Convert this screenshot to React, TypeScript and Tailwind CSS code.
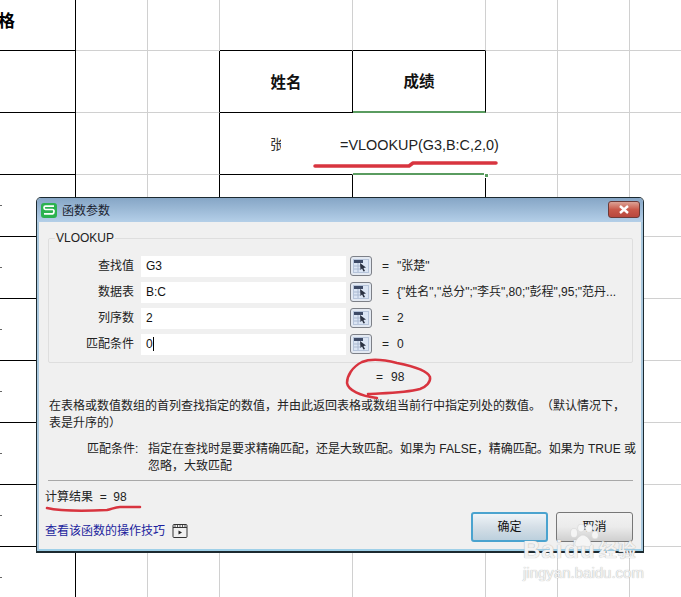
import React from "react";

const font = { fontFamily: '"Liberation Sans", "Noto Sans CJK SC", sans-serif' };

const colWidths = ["w-[76px]", "w-[72px]", "w-[72px]", "w-[133px]", "w-[133px]", "w-[72px]", "w-[72px]", "w-[52px]"];
const rowHeights = ["h-[51px]", "h-[62px]", "h-[62px]", "h-[62px]", "h-[62px]", "h-[62px]", "h-[62px]", "h-[62px]", "h-[62px]", "h-[62px]"];

function cellBorders(row: number, col: number) {
  let right = "border-r-[#d0d0d0]";
  let bottom = "border-b border-b-[#d0d0d0]";
  if (col === 0) {
    right = "border-r-black";
    bottom = "border-b border-b-black";
  }
  if (col === 2 && (row === 1 || row === 2 || row === 3)) right = "border-r-black";
  if ((col === 3 || col === 4) && (row === 1 || row === 3)) right = "border-r-black";
  if ((col === 3 || col === 4) && row === 2) right = "border-r-transparent";
  if ((col === 3 || col === 4) && row === 0) bottom = "border-b border-b-black";
  if (col === 3 && (row === 1 || row === 2)) bottom = "border-b border-b-black";
  if (col === 4 && (row === 1 || row === 2)) bottom = "border-b-2 border-b-[#5a9c60]";
  return `${right} ${bottom}`;
}

function RefButton() {
  return (
    <button className="w-[22px] h-[20px] rounded-[3px] border border-[#7d8087] bg-[#e3e9f2] flex items-center justify-center shrink-0">
      <svg width="16" height="14" viewBox="0 0 16 14">
        <rect x="0.5" y="0.5" width="15" height="13" fill="#dbe5f4" stroke="#b6c4da" />
        <rect x="1" y="1" width="9" height="3" fill="#3d4a66" />
        <path d="M1 7h7M1 10h7M5 4v9" stroke="#a9b8d0" strokeWidth="1" />
        <path d="M7 4l6 4.5-2.5.5 1.5 3-1.5.5-1.5-3L7.500 11z" fill="#2b3242" />
      </svg>
    </button>
  );
}

function ParamRow({ label, value, result, caret }: { label: string; value: string; result: string; caret?: boolean }) {
  return (
    <div className="flex items-center h-[26px]">
      <div className="w-[85px] text-right text-[12px] text-[#222] shrink-0">{label}</div>
      <div className="ml-[7px] w-[205px] h-[21px] bg-white flex items-center pl-[5px] text-[12px] text-[#111] shrink-0">
        {value}
        {caret && <span className="w-px h-[14px] bg-black" />}
      </div>
      <div className="ml-[4px]">
        <RefButton />
      </div>
      <div className="ml-[10px] text-[12px] text-[#222] whitespace-nowrap">
        <span className="mr-[8px]">=</span>
        {result}
      </div>
    </div>
  );
}

function Dialog() {
  return (
    <div
      style={font}
      className="absolute left-[36px] top-[197px] w-[608px] h-[356px] rounded-t-[5px] border border-[#1c2a30] border-b-2 bg-[#f0f0f0] overflow-hidden flex flex-col [text-spacing-trim:space-all]"
    >
      <div className="h-[24px] bg-gradient-to-b from-[#86a6c6] to-[#b4cfe8] flex items-center pl-[4px] pr-[4px] shrink-0">
        <div className="w-[16px] h-[15px] rounded-[3px] bg-[#2cb24f] flex items-center justify-center">
          <svg width="12" height="10" viewBox="0 0 12 10">
            <path d="M11 1.200H2.500Q1 1.200 1 2.700T2.500 4.500h7Q11 4.500 11 6.500T9.500 8.800H1" fill="none" stroke="#fff" strokeWidth="1.700" />
          </svg>
        </div>
        <span className="ml-[5px] pt-[2px] text-[12px] text-[#1a2230]">函数参数</span>
        <div className="ml-auto mr-[-1px] mt-[-2px] w-[32px] h-[17px] rounded-[3px] border border-[#6d3a38] bg-gradient-to-b from-[#dba296] via-[#c9594a] to-[#b8473d] flex items-center justify-center">
          <svg width="12" height="9" viewBox="0 0 12 9">
            <path d="M2 1l8 7M10 1L2 8" stroke="#fff" strokeWidth="2.400" />
          </svg>
        </div>
      </div>

      <div className="flex-1 flex flex-col px-[9px] border-x-2 border-b-2 border-x-[#a9c8de] border-b-[#9fd0e8]">
        <div className="relative mt-[16px] h-[125px] border border-[#dedede] rounded-[2px] pt-[14px] mr-[-1px]">
          <span className="absolute left-[6px] top-[-8px] bg-[#f0f0f0] px-[1px] text-[12px] leading-[14px] text-[#222]">VLOOKUP</span>
          <ParamRow label="查找值" value="G3" result={'"张楚"'} />
          <ParamRow label="数据表" value="B:C" result={'{"姓名","总分";"李兵",80;"彭程",95;"范丹...'} />
          <ParamRow label="列序数" value="2" result="2" />
          <ParamRow label="匹配条件" value="0" result="0" caret />
        </div>

        <div className="h-[30px] pl-[328px] pt-[6px] text-[12px] leading-[16px] text-[#222]">
          <span className="mr-[8px]">=</span>98
        </div>

        <p className="pl-[1px] mt-[5px] text-[12px] leading-[17px] text-[#222] whitespace-nowrap">
          在表格或数值数组的首列查找指定的数值，并由此返回表格或数组当前行中指定列处的数值。（默认情况下，
          <br />
          表是升序的）
        </p>

        <div className="flex mt-[9px] text-[12px] leading-[17px] text-[#222]">
          <div className="w-[100px] pl-[39px] shrink-0">匹配条件:</div>
          <div className="whitespace-nowrap">
            指定在查找时是要求精确匹配，还是大致匹配。如果为 FALSE，精确匹配。如果为 TRUE 或
            <br />
            忽略，大致匹配
          </div>
        </div>

        <div className="mt-[5px] h-px bg-[#a8a8a8] mr-[-1px]" />

        <div className="flex flex-1 justify-between">
          <div className="flex flex-col pt-[8px] ml-[-3px]">
            <div className="text-[12px] leading-[16px] text-[#222] whitespace-pre">计算结果  =  98</div>
            <div className="mt-[18px] flex items-center">
              <span className="text-[12px] leading-[16px] text-[#1c1f9e]">查看该函数的操作技巧</span>
              <svg className="ml-[7px]" width="16" height="16" viewBox="0 0 16 16">
                <rect x="1" y="1.500" width="14" height="13" rx="1" fill="none" stroke="#333" />
                <path d="M1 4.500h14" stroke="#333" />
                <path d="M3 1.500v3M5.500 1.500v3M8 1.500v3M10.500 1.500v3M13 1.500v3" stroke="#333" strokeWidth="0.800" />
                <path d="M6.500 7.500l3.500 2-3.500 2z" fill="#222" />
              </svg>
            </div>
          </div>
          <div className="flex gap-[8px] pt-[31px] mr-[-1px]">
            <button className="w-[77px] h-[30px] rounded-[3px] border-2 border-[#4aa3cf] bg-gradient-to-b from-[#eff4f8] via-[#d5dfe7] to-[#bcd0dd] text-[12px] text-[#111]">确定</button>
            <button className="w-[77px] h-[30px] rounded-[3px] border border-[#777] bg-gradient-to-b from-[#f2f2f2] via-[#ebebeb] to-[#cfcfcf] text-[12px] text-[#111]">取消</button>
          </div>
        </div>
      </div>
    </div>
  );
}

function Watermark() {
  return (
    <div style={font} className="absolute left-[523px] top-[524px] w-[124px] pointer-events-none">
      <svg className="absolute left-[41px] top-0" width="36" height="24" viewBox="0 0 36 24" fill="#f5f5f5" stroke="#d4d4d4" strokeWidth="0.600">
        <ellipse cx="10" cy="9" rx="3.500" ry="4.500" />
        <ellipse cx="17" cy="4" rx="3.500" ry="4" />
        <ellipse cx="25" cy="4.500" rx="3.500" ry="4" />
        <ellipse cx="31" cy="11" rx="3.500" ry="4" />
        <path d="M19 11c4 0 9 7 8 10-2 3-5 1-8 1s-6 2-8-1c-1-3 4-10 8-10z" />
      </svg>
      <div className="mt-[14px] flex items-end text-[24px] leading-[24px] font-bold tracking-[1px] text-[#f2f2f2] [text-shadow:0_0_1px_#a0a0a0]">
        <span>Bai</span>
        <span className="ml-[1px]">du</span>
        <span className="ml-[3px] text-[18px] leading-[22px]">经验</span>
      </div>
      <div className="mt-[3px] text-[15px] leading-[16px] whitespace-nowrap text-[#f2f2f2] [text-shadow:0_0_1px_#a0a0a0]">jingyan.baidu.com</div>
    </div>
  );
}

export default function App() {
  return (
    <div style={font} className="relative w-[681px] h-[597px] overflow-hidden bg-white">
      <div className="flex flex-col">
        {rowHeights.map((h, r) => (
          <div key={r} className={`flex shrink-0 ${h}`}>
            {colWidths.map((w, c) => (
              <div key={c} className={`relative shrink-0 border-r flex items-center justify-center ${w} ${h} ${cellBorders(r, c)}`}>
                {r === 0 && c === 0 && <span className="absolute left-[-2px] top-[13px] text-[17px] leading-[18px] font-bold text-black">格</span>}
                {r > 2 && c === 0 && <span className="absolute left-0 top-[30px] w-[2px] h-px bg-[#666]" />}
                {r === 1 && c === 3 && <span className="pt-[2px] text-[15.5px] font-bold text-[#111]">姓名</span>}
                {r === 1 && c === 4 && <span className="pt-[2px] text-[15.5px] font-bold text-[#111]">成绩</span>}
                {r === 2 && c === 3 && (
                  <>
                    <span className="absolute left-[50px] top-[22px] w-[11px] overflow-hidden text-[14px] leading-[18px] whitespace-nowrap text-[#333]">张楚</span>
                    <span className="absolute left-[120px] top-[22px] z-10 text-[14.4px] leading-[20px] text-[#222] whitespace-nowrap">=VLOOKUP(G3,B:C,2,0)</span>
                  </>
                )}
              </div>
            ))}
          </div>
        ))}
      </div>

      <Dialog />

      <svg className="absolute inset-0 pointer-events-none" width="681" height="597" viewBox="0 0 681 597" fill="none" stroke="#d8343f" strokeLinecap="round" strokeLinejoin="round">
        <path d="M315 166L409 166L413 163L496 163" strokeWidth="3.500" />
        <path d="M368 394C385 393 405 393 420 389C426 387 431 382 430 377C428 371 412 366 397 363C385 360 372 358 362 362C352 367 347 376 347 383C348 390 360 396 377 398" strokeWidth="2.500" />
        <path d="M47 508C60 511 85 511 107 510C112 509 115 507 120 507L140 507" strokeWidth="2.500" />
      </svg>

      <div className="absolute left-[484px] top-[173px] w-[5px] h-[5px] bg-[#5a9c60] border border-white" />

      <Watermark />
    </div>
  );
}
